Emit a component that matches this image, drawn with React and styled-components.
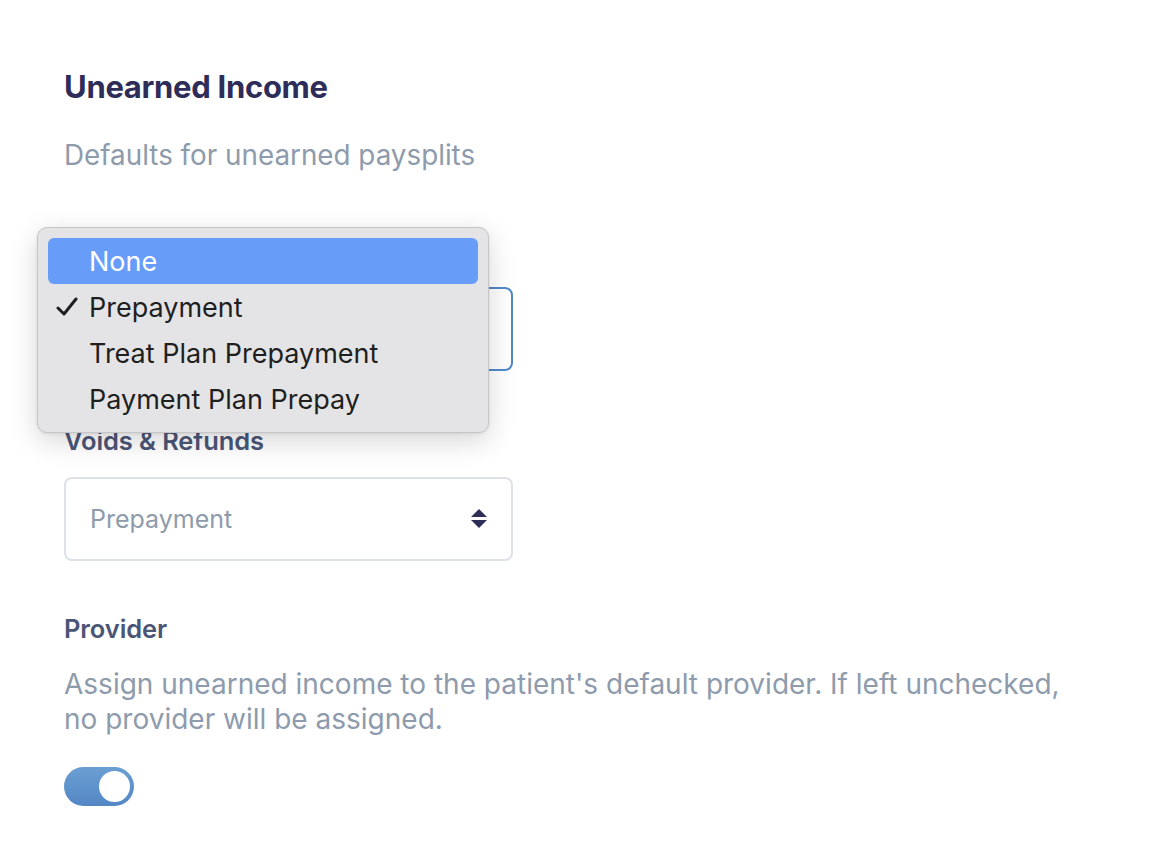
import React, { useState } from 'react';
import styled, { createGlobalStyle } from 'styled-components';

const GlobalStyle = createGlobalStyle`
  html, body {
    margin: 0;
    padding: 0;
    background: #ffffff;
  }
  body {
    font-family: Inter, "Noto Sans", "Liberation Sans", sans-serif;
  }
`;

const Page = styled.div`
  padding: 68px 64px 40px 64px;
  min-height: 864px;
  box-sizing: border-box;
`;

const Title = styled.h2`
  margin: 0;
  font-size: 31px;
  line-height: 38px;
  font-weight: 700;
  letter-spacing: -0.3px;
  color: #2e2c58;
`;

const Subtitle = styled.p`
  margin: 31px 0 0 0;
  font-size: 27.8px;
  line-height: 36px;
  color: #8e9bac;
`;

const Field = styled.div`
  margin-top: ${(p) => p.gap}px;
  display: flex;
  flex-direction: column;
  gap: 20px;
`;

const Label = styled.div`
  font-size: 25.5px;
  line-height: 32px;
  font-weight: 600;
  letter-spacing: -0.1px;
  color: #4b5677;
`;

const SelectWrap = styled.div`
  position: relative;
  width: 449px;
`;

const SelectBox = styled.div`
  height: 84px;
  box-sizing: border-box;
  border: 2px solid ${(p) => (p.focused ? '#5189c8' : '#dde2e8')};
  border-radius: 8px;
  display: flex;
  align-items: center;
  justify-content: space-between;
  padding: 0 24px 0 24px;
  font-size: 25px;
  color: #8e9bac;
  background: #fff;
`;

const Menu = styled.ul`
  position: absolute;
  left: -27px;
  top: -60px;
  width: 452px;
  margin: 0;
  padding: 10px;
  box-sizing: border-box;
  list-style: none;
  background: #e4e4e6;
  border: 1px solid #c6c6c8;
  border-radius: 10px;
  box-shadow: 0 8px 28px rgba(0, 0, 0, 0.16), 0 1px 3px rgba(0, 0, 0, 0.08);
  z-index: 5;
`;

const MenuItem = styled.li`
  position: relative;
  height: 46px;
  display: flex;
  align-items: center;
  padding-left: 41px;
  border-radius: 6px;
  font-size: 27px;
  color: ${(p) => (p.active ? '#ffffff' : '#1f1f1f')};
  background: ${(p) => (p.active ? '#679cf8' : 'transparent')};
`;

const Check = styled.span`
  position: absolute;
  left: 8px;
  top: 50%;
  transform: translateY(-50%);
  display: flex;
`;

const Desc = styled.p`
  margin: 2px 0 0 0;
  max-width: 1012px;
  font-size: 28px;
  line-height: 35px;
  color: #8e9bac;
`;

const Toggle = styled.button`
  margin-top: 10px;
  width: 70px;
  height: 39px;
  border: none;
  padding: 0;
  border-radius: 20px;
  background: linear-gradient(180deg, #6a9fd3 0%, #5487c4 100%);
  position: relative;
  cursor: pointer;
`;

const Knob = styled.span`
  position: absolute;
  top: 4px;
  right: 4px;
  width: 31px;
  height: 31px;
  border-radius: 50%;
  background: #fff;
`;

const Arrows = () => (
  <svg width="16" height="20" viewBox="0 0 16 20">
    <path d="M8 0 L16 8 H0 Z" fill="#2e2c58" />
    <path d="M0 11 H16 L8 19 Z" fill="#2e2c58" />
  </svg>
);

const options = ['None', 'Prepayment', 'Treat Plan Prepayment', 'Payment Plan Prepay'];

export default function App() {
  const [on, setOn] = useState(true);
  const selected = 'Prepayment';

  return (
    <Page>
      <GlobalStyle />
      <Title>Unearned Income</Title>
      <Subtitle>Defaults for unearned paysplits</Subtitle>

      <Field gap={62}>
        <Label>Payments</Label>
        <SelectWrap>
          <SelectBox focused>
            <span>Prepayment</span>
            <Arrows />
          </SelectBox>
          <Menu>
            {options.map((o, i) => (
              <MenuItem key={o} active={i === 0}>
                {o === selected && (
                  <Check>
                    <svg width="22" height="20" viewBox="0 0 22 20">
                      <path d="M2 11 L8 17 L20 2" fill="none" stroke="#1f1f1f" strokeWidth="3" strokeLinecap="round" strokeLinejoin="round" />
                    </svg>
                  </Check>
                )}
                {o}
              </MenuItem>
            ))}
          </Menu>
        </SelectWrap>
      </Field>

      <Field gap={54}>
        <Label>Voids &amp; Refunds</Label>
        <SelectWrap>
          <SelectBox>
            <span>Prepayment</span>
            <Arrows />
          </SelectBox>
        </SelectWrap>
      </Field>

      <Field gap={52}>
        <Label>Provider</Label>
        <Desc>
          Assign unearned income to the patient's default provider. If left unchecked, no provider will be assigned.
        </Desc>
        <Toggle onClick={() => setOn(!on)} aria-pressed={on}>
          <Knob />
        </Toggle>
      </Field>
    </Page>
  );
}
